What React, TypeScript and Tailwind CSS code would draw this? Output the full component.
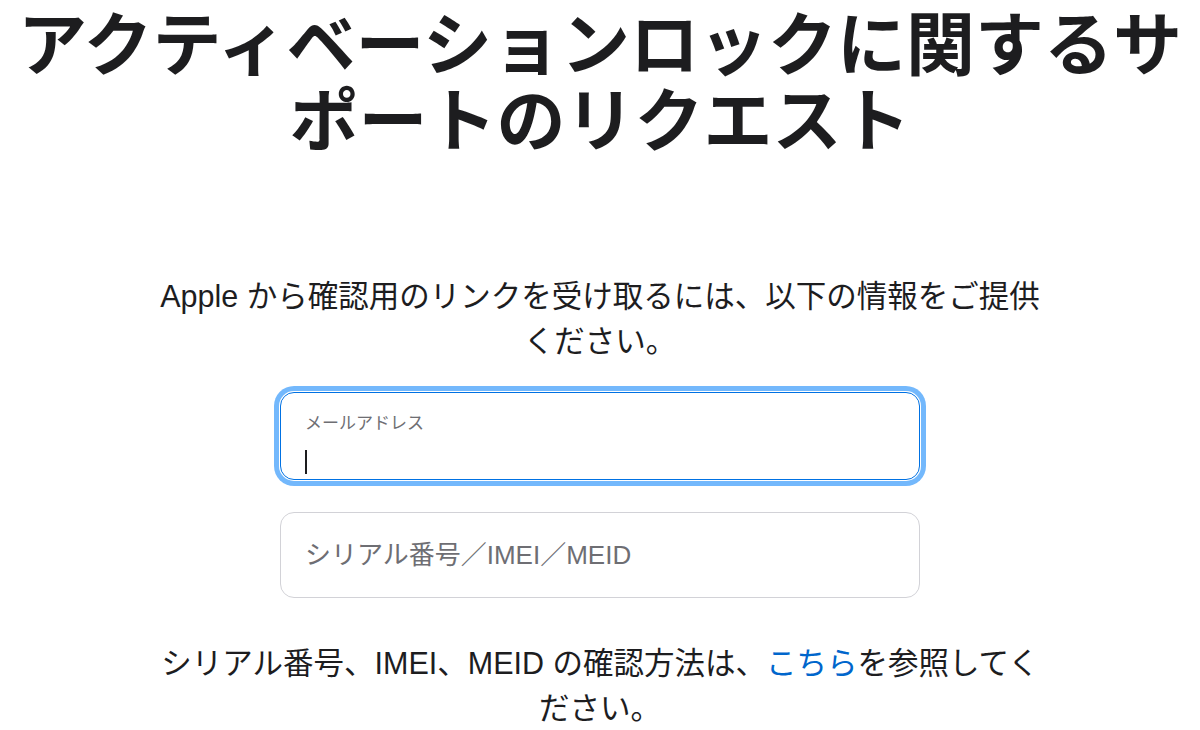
const bodyFont = "font-['Liberation_Sans','Noto_Sans_CJK_JP',sans-serif]"

const FocusedField = ({ label }: { label: string }) => (
  <div className="flex h-[88px] flex-col rounded-[14px] border border-[#0071e3] bg-white px-[24px] shadow-[0_0_0_1px_#ffffff,0_0_0_6px_rgba(0,125,250,0.55)]">
    <span className="pt-[21px] text-[17px] leading-[20px] text-[#6e6e73]">{label}</span>
    <span className="mt-[16px] h-[24px] w-[2px] bg-[#1d1d1f]" />
  </div>
)

const PlainField = ({ placeholder }: { placeholder: string }) => (
  <input
    type="text"
    placeholder={placeholder}
    className="h-[86px] w-full rounded-[14px] border border-[#d2d2d7] bg-white px-[24px] text-[26px] text-[#1d1d1f] outline-none placeholder:text-[#6e6e73]"
  />
)

export default function App() {
  return (
    <div className={`flex min-h-screen flex-col items-center bg-white text-[#1d1d1f] ${bodyFont}`}>
      <h1 className="pt-[2px] text-center font-['Noto_Sans_CJK_JP',sans-serif] text-[69px] font-bold leading-[76px]">
        アクティベーションロックに関するサポートのリクエスト
      </h1>

      <p className="mt-[120px] max-w-[895px] text-center text-[30.5px] leading-[45px]">
        Apple から確認用のリンクを受け取るには、以下の情報をご提供ください。
      </p>

      <div className="mt-[28px] flex w-[640px] flex-col gap-[32px]">
        <FocusedField label="メールアドレス" />
        <PlainField placeholder="シリアル番号／IMEI／MEID" />
      </div>

      <p className="mt-[43px] max-w-[895px] text-center text-[30.5px] leading-[45px]">
        シリアル番号、IMEI、MEID の確認方法は、<a href="#" className="text-[#0066cc]">こちら</a>を参照してください。
      </p>
    </div>
  )
}
